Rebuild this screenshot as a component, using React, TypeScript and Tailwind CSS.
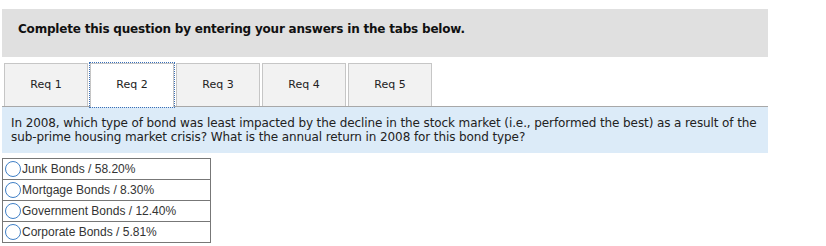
import React, { useState } from 'react';

const TABS = ['Req 1', 'Req 2', 'Req 3', 'Req 4', 'Req 5'];

const OPTIONS = [
  'Junk Bonds / 58.20%',
  'Mortgage Bonds / 8.30%',
  'Government Bonds / 12.40%',
  'Corporate Bonds / 5.81%',
];

export default function App() {
  const [active, setActive] = useState(1);
  const [choice, setChoice] = useState<number | null>(null);

  return (
    <div className="w-[826px] h-[246px] bg-white pt-[9px] pl-[2px] font-['DejaVu_Sans',sans-serif] text-[#222]">
      {/* Instructions bar */}
      <div className="w-[766px] h-[48px] bg-[#e0e0e0] pl-[16px] pt-[12px]">
        <p className="text-[12px] tracking-[-0.2px] leading-[16px] font-bold text-[#111]">
          Complete this question by entering your answers in the tabs below.
        </p>
      </div>

      {/* Tabs */}
      <div className="w-[766px] mt-[6px] flex gap-[2px] pl-[2px] border-b border-[#a8a8a8] h-[44px]">
        {TABS.map((tab, i) => (
          <button
            key={tab}
            type="button"
            onClick={() => setActive(i)}
            className={
              i === active
                ? 'w-[84px] h-[44px] bg-white border border-[#c6c6c6] border-b-0 outline-1 outline-dotted outline-[#3a6fb7] text-[11px] text-[#222] relative z-10'
                : 'w-[84px] h-[43px] bg-[#f2f2f2] border border-[#c6c6c6] border-b-0 text-[11px] text-[#222]'
            }
          >
            {tab}
          </button>
        ))}
      </div>

      {/* Question */}
      <div className="w-[766px] h-[46px] bg-[#dcebf8] pl-[9px] pt-[9px]">
        <p className="text-[12px] tracking-[-0.1px] leading-[14px] whitespace-nowrap">
          <span className="block">
            In 2008, which type of bond was least impacted by the decline in the stock market (i.e., performed the best) as a result of the
          </span>
          <span className="block">
            sub-prime housing market crisis? What is the annual return in 2008 for this bond type?
          </span>
        </p>
      </div>

      {/* Answer options */}
      <div className="mt-[5px] w-[209px] border border-[#777] font-['Liberation_Sans',Arial,sans-serif]">
        {OPTIONS.map((opt, i) => (
          <label
            key={opt}
            className={`flex items-center pl-[2px] gap-[1px] cursor-pointer ${i > 0 ? 'h-[21px] border-t border-[#777]' : 'h-[20px]'}`}
          >
            <input
              type="radio"
              name="bond"
              checked={choice === i}
              onChange={() => setChoice(i)}
              className="sr-only"
            />
            <span className="w-[16px] h-[16px] rounded-full border border-[#3f7fc6] bg-white flex items-center justify-center">
              {choice === i && <span className="w-[8px] h-[8px] rounded-full bg-[#3f7fc6]" />}
            </span>
            <span className="text-[12px] text-[#333]">{opt}</span>
          </label>
        ))}
      </div>
    </div>
  );
}
